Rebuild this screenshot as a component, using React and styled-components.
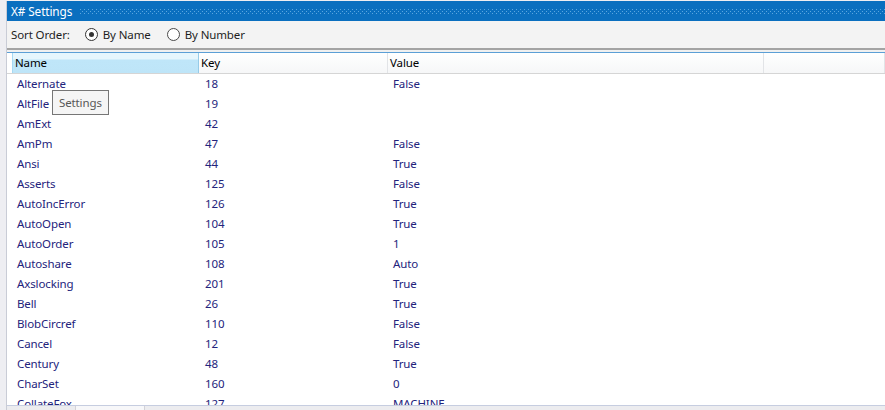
import React from "react";
import styled, { createGlobalStyle } from "styled-components";

const Global = createGlobalStyle`
  html, body { margin: 0; padding: 0; overflow: hidden; }
  body {
    background: #eeeef2;
    font-family: "Noto Sans", "Open Sans", Arial, sans-serif;
    font-size: 11.5px;
    letter-spacing: -0.12px;
  }
`;

const Page = styled.div`
  height: 410px;
  display: flex;
  flex-direction: column;
  padding-top: 1px;
  box-sizing: border-box;
  background: #eeeef2;
`;

const Panel = styled.div`
  flex: 1;
  min-height: 0;
  margin-left: 6px;
  border-left: 1px solid #c9ccd6;
  display: flex;
  flex-direction: column;
`;

const TitleBar = styled.div`
  height: 20px;
  background: #0a6fbf;
  color: #ffffff;
  display: flex;
  align-items: center;
  padding-left: 4px;
  gap: 8px;
  font-size: 11.8px;
`;

const TitleText = styled.span`
  white-space: nowrap;
  line-height: 20px;
`;

const Grip = styled.div`
  flex: 1;
  height: 5px;
  margin-top: 1px;
  background:
    repeating-linear-gradient(90deg, #5aa6df 0 1px, transparent 1px 4px) 0 0 / 100% 1px no-repeat,
    repeating-linear-gradient(90deg, #5aa6df 0 1px, transparent 1px 4px) 2px 2px / 100% 1px no-repeat,
    repeating-linear-gradient(90deg, #5aa6df 0 1px, transparent 1px 4px) 0 4px / 100% 1px no-repeat;
`;

const Toolbar = styled.div`
  height: 27px;
  background: #f3f3f3;
  display: flex;
  align-items: center;
  padding-left: 4px;
  color: #1e1e1e;
  border-bottom: 2px solid #a3a3a3;
`;

const Label = styled.span`
  margin-right: 15px;
`;

const RadioOption = styled.label`
  display: flex;
  align-items: center;
  gap: 5px;
  margin-right: 16px;
`;

const RadioCircle = styled.span`
  width: 11px;
  height: 11px;
  border-radius: 50%;
  border: 1px solid ${(p) => (p.$checked ? "#333333" : "#4a4a4a")};
  background: #ffffff;
  display: flex;
  align-items: center;
  justify-content: center;
  &::after {
    content: "";
    width: 5px;
    height: 5px;
    border-radius: 50%;
    background: #333333;
    display: ${(p) => (p.$checked ? "block" : "none")};
  }
`;

const Gap = styled.div`
  height: 2px;
  background: #f0f0f0;
`;

const Grid = styled.div`
  flex: 1;
  min-height: 0;
  display: flex;
  flex-direction: column;
  background: #ffffff;
  border-top: 1px solid #5c9fd6;
  border-bottom: 1px solid #c6cde0;
  overflow: hidden;
`;

const Cols = `
  display: grid;
  grid-template-columns: 5px 187px 189px 376px 1fr;
`;

const HeaderRow = styled.div`
  ${Cols}
  height: 20px;
  border-bottom: 1px solid #d5d5d5;
  flex-shrink: 0;
`;

const HeaderCell = styled.div`
  box-sizing: border-box;
  height: 20px;
  line-height: 20px;
  padding-left: 2px;
  color: #000000;
  white-space: nowrap;
  overflow: hidden;
  border-right: 1px solid ${(p) => (p.$active ? "#96cbe8" : "#e2e4e7")};
  border-left: ${(p) => (p.$active ? "1px solid #a6d9f3" : "none")};
  background: ${(p) =>
    p.$active
      ? "linear-gradient(to bottom, #e6f6fd 0, #e6f6fd 6px, #bfe6f9 7px, #bee5f8 100%)"
      : "linear-gradient(to bottom, #ffffff 0, #f6f7f8 100%)"};
`;

const Spacer = styled.div``;

const Body = styled.div`
  flex: 1;
  min-height: 0;
  overflow: hidden;
`;

const Row = styled.div`
  ${Cols}
  height: 20px;
`;

const Cell = styled.div`
  line-height: 20px;
  padding-left: ${(p) => p.$pad}px;
  color: #23237c;
  white-space: nowrap;
  overflow: hidden;
`;

const Footer = styled.div`
  height: 4px;
  flex-shrink: 0;
  background: #ececef;
  display: flex;
`;

const FooterTab = styled.div`
  margin-left: 68px;
  width: 68px;
  background: #f7f7f9;
  border-left: 1px solid #d2d2d8;
  border-right: 1px solid #d2d2d8;
`;

const Tooltip = styled.div`
  position: absolute;
  left: 52px;
  top: 90px;
  height: 25px;
  box-sizing: border-box;
  padding: 0 6px;
  line-height: 23px;
  background: #f5f5f5;
  border: 1px solid #767676;
  color: #575757;
  white-space: nowrap;
`;

const rows = [
  ["Alternate", "18", "False"],
  ["AltFile", "19", ""],
  ["AmExt", "42", ""],
  ["AmPm", "47", "False"],
  ["Ansi", "44", "True"],
  ["Asserts", "125", "False"],
  ["AutoIncError", "126", "True"],
  ["AutoOpen", "104", "True"],
  ["AutoOrder", "105", "1"],
  ["Autoshare", "108", "Auto"],
  ["Axslocking", "201", "True"],
  ["Bell", "26", "True"],
  ["BlobCircref", "110", "False"],
  ["Cancel", "12", "False"],
  ["Century", "48", "True"],
  ["CharSet", "160", "0"],
  ["CollateFox", "127", "MACHINE"],
];

export default function App() {
  return (
    <>
      <Global />
      <Page>
        <Panel>
          <TitleBar>
            <TitleText>X# Settings</TitleText>
            <Grip />
          </TitleBar>
          <Toolbar>
            <Label>Sort Order:</Label>
            <RadioOption>
              <RadioCircle $checked />
              By Name
            </RadioOption>
            <RadioOption>
              <RadioCircle />
              By Number
            </RadioOption>
          </Toolbar>
          <Gap />
          <Grid>
            <HeaderRow>
              <Spacer />
              <HeaderCell $active>Name</HeaderCell>
              <HeaderCell>Key</HeaderCell>
              <HeaderCell>Value</HeaderCell>
              <HeaderCell />
            </HeaderRow>
            <Body>
              {rows.map(([n, k, v]) => (
                <Row key={n}>
                  <Spacer />
                  <Cell $pad={5}>{n}</Cell>
                  <Cell $pad={6}>{k}</Cell>
                  <Cell $pad={5}>{v}</Cell>
                  <Spacer />
                </Row>
              ))}
            </Body>
          </Grid>
          <Footer>
            <FooterTab />
          </Footer>
        </Panel>
      </Page>
      <Tooltip>Settings</Tooltip>
    </>
  );
}
